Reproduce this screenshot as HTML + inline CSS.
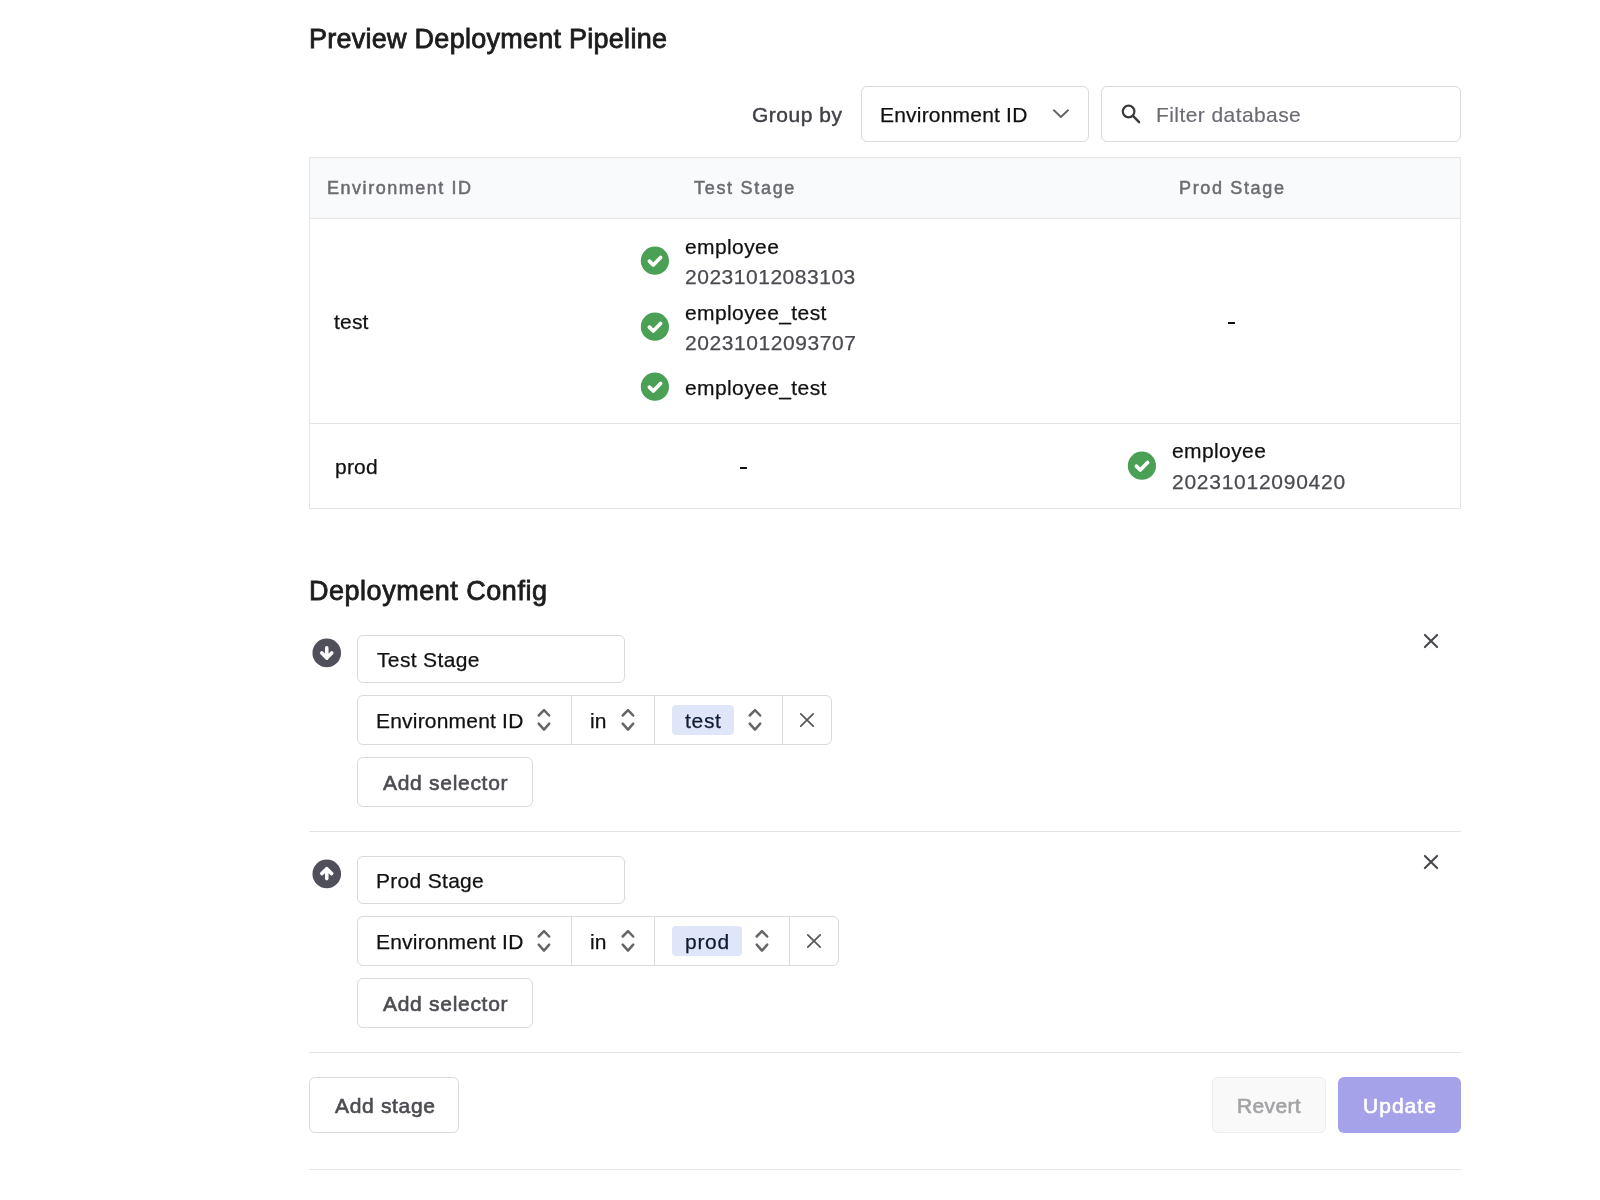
<!DOCTYPE html>
<html>
<head>
<meta charset="utf-8">
<title>Deployment Config</title>
<style>
html,body{margin:0;padding:0;background:#fff;}
body{width:1600px;height:1200px;position:relative;overflow:hidden;font-family:"Liberation Sans",sans-serif;color:#111;}
.a{position:absolute;}
.t{position:absolute;white-space:pre;line-height:1;will-change:transform;}
svg{position:absolute;overflow:visible;}
</style>
</head>
<body>
<div class="t" style="left:308.7px;top:25.75px;font-size:27px;font-weight:400;letter-spacing:0.26px;color:#1c1c1e;-webkit-text-stroke:0.8px #1c1c1e;">Preview Deployment Pipeline</div>
<div class="t" style="left:752px;top:103.60px;font-size:21px;font-weight:400;letter-spacing:0.5px;color:#3f3f46;-webkit-text-stroke:0.45px #3f3f46;">Group by</div>
<div class="a" style="left:861px;top:86px;width:228px;height:56px;box-sizing:border-box;border:1px solid #d9d9de;border-radius:6px;background:#fff;"></div>
<div class="t" style="left:880px;top:104.20px;font-size:21px;font-weight:400;letter-spacing:0.2px;color:#111;-webkit-text-stroke:0.25px #111;">Environment ID</div>
<svg style="left:1045px;top:100px" width="30" height="28"><path d="M8.9 10.3 L15.9 17 L23 10.3" fill="none" stroke="#666" stroke-width="1.9" stroke-linecap="round" stroke-linejoin="round"/></svg>
<div class="a" style="left:1101px;top:86px;width:360px;height:56px;box-sizing:border-box;border:1px solid #d9d9de;border-radius:6px;background:#fff;"></div>
<svg style="left:1115px;top:100px" width="32" height="28"><circle cx="13.6" cy="11.5" r="5.8" fill="none" stroke="#3a3a3a" stroke-width="2.2"/><path d="M18 15.9 L24.1 22.2" stroke="#3a3a3a" stroke-width="2.4" stroke-linecap="round"/></svg>
<div class="t" style="left:1155.8px;top:104.00px;font-size:21px;font-weight:400;letter-spacing:0.42px;color:#6b6b73;-webkit-text-stroke:0.15px #6b6b73;">Filter database</div>
<div class="a" style="left:309px;top:157px;width:1152px;height:352px;box-sizing:border-box;border:1px solid #e4e5e7;"></div>
<div class="a" style="left:310px;top:158px;width:1150px;height:60px;background:#f9fafb;"></div>
<div class="a" style="left:310px;top:218px;width:1150px;height:1px;background:#e4e5e7;"></div>
<div class="a" style="left:310px;top:423px;width:1150px;height:1px;background:#e4e5e7;"></div>
<div class="t" style="left:327px;top:179.00px;font-size:18px;font-weight:400;letter-spacing:1.53px;color:#6b6b70;-webkit-text-stroke:0.5px #6b6b70;">Environment ID</div>
<div class="t" style="left:694px;top:179.00px;font-size:18px;font-weight:400;letter-spacing:1.7px;color:#6b6b70;-webkit-text-stroke:0.5px #6b6b70;">Test Stage</div>
<div class="t" style="left:1179px;top:179.00px;font-size:18px;font-weight:400;letter-spacing:1.65px;color:#6b6b70;-webkit-text-stroke:0.5px #6b6b70;">Prod Stage</div>
<div class="t" style="left:334px;top:310.60px;font-size:21px;font-weight:400;letter-spacing:0.2px;color:#111;-webkit-text-stroke:0.25px #111;">test</div>
<div class="t" style="left:334.5px;top:455.60px;font-size:21px;font-weight:400;letter-spacing:0.2px;color:#111;-webkit-text-stroke:0.25px #111;">prod</div>
<svg style="left:640px;top:246px" width="30" height="30" viewBox="0 0 30 30"><circle cx="14.9" cy="14.7" r="14.1" fill="#4aa054"/><path d="M9.4 15.1 L13.3 19 L20.6 11.5" fill="none" stroke="#fff" stroke-width="3.7" stroke-linecap="round" stroke-linejoin="round"/></svg>
<svg style="left:640px;top:312px" width="30" height="30" viewBox="0 0 30 30"><circle cx="14.9" cy="14.7" r="14.1" fill="#4aa054"/><path d="M9.4 15.1 L13.3 19 L20.6 11.5" fill="none" stroke="#fff" stroke-width="3.7" stroke-linecap="round" stroke-linejoin="round"/></svg>
<svg style="left:640px;top:372px" width="30" height="30" viewBox="0 0 30 30"><circle cx="14.9" cy="14.7" r="14.1" fill="#4aa054"/><path d="M9.4 15.1 L13.3 19 L20.6 11.5" fill="none" stroke="#fff" stroke-width="3.7" stroke-linecap="round" stroke-linejoin="round"/></svg>
<svg style="left:1127px;top:451px" width="30" height="30" viewBox="0 0 30 30"><circle cx="14.9" cy="14.7" r="14.1" fill="#4aa054"/><path d="M9.4 15.1 L13.3 19 L20.6 11.5" fill="none" stroke="#fff" stroke-width="3.7" stroke-linecap="round" stroke-linejoin="round"/></svg>
<div class="t" style="left:685px;top:235.60px;font-size:21px;font-weight:400;letter-spacing:0.4px;color:#111;-webkit-text-stroke:0.25px #111;">employee</div>
<div class="t" style="left:685px;top:265.75px;font-size:21px;font-weight:400;letter-spacing:0.52px;color:#4a4a50;-webkit-text-stroke:0.25px #4a4a50;">20231012083103</div>
<div class="t" style="left:685px;top:301.50px;font-size:21px;font-weight:400;letter-spacing:0.4px;color:#111;-webkit-text-stroke:0.25px #111;">employee_test</div>
<div class="t" style="left:685px;top:331.50px;font-size:21px;font-weight:400;letter-spacing:0.58px;color:#4a4a50;-webkit-text-stroke:0.25px #4a4a50;">20231012093707</div>
<div class="t" style="left:685px;top:376.50px;font-size:21px;font-weight:400;letter-spacing:0.4px;color:#111;-webkit-text-stroke:0.25px #111;">employee_test</div>
<div class="t" style="left:1172px;top:440.30px;font-size:21px;font-weight:400;letter-spacing:0.4px;color:#111;-webkit-text-stroke:0.25px #111;">employee</div>
<div class="t" style="left:1172px;top:470.75px;font-size:21px;font-weight:400;letter-spacing:0.74px;color:#4a4a50;-webkit-text-stroke:0.25px #4a4a50;">20231012090420</div>
<div class="a" style="left:1228px;top:322px;width:7px;height:2px;background:#111;"></div>
<div class="a" style="left:740px;top:467px;width:7px;height:2px;background:#111;"></div>
<div class="t" style="left:308.5px;top:577.50px;font-size:27px;font-weight:400;letter-spacing:0.52px;color:#1c1c1e;-webkit-text-stroke:0.8px #1c1c1e;">Deployment Config</div>
<svg style="left:312px;top:638px" width="30" height="30"><circle cx="14.75" cy="14.9" r="14.3" fill="#50505a"/><path d="M14.75 9.9 L14.75 19.5 M9.8 15 L14.75 20.1 L19.7 15" fill="none" stroke="#fff" stroke-width="3.6" stroke-linecap="round" stroke-linejoin="round"/></svg>
<div class="a" style="left:357px;top:635px;width:268px;height:48px;box-sizing:border-box;border:1px solid #d9d9de;border-radius:6px;background:#fff;"></div>
<div class="t" style="left:376.5px;top:648.70px;font-size:21px;font-weight:400;letter-spacing:0.35px;color:#111;-webkit-text-stroke:0.25px #111;">Test Stage</div>
<svg style="left:1421px;top:631px" width="20" height="20"><path d="M3.9 3.9 L16.1 16.1 M16.1 3.9 L3.9 16.1" stroke="#48484d" stroke-width="2.1" stroke-linecap="round"/></svg>
<div class="a" style="left:357px;top:695px;width:475px;height:50px;box-sizing:border-box;border:1px solid #d9d9de;border-radius:6px;background:#fff;"></div>
<div class="a" style="left:571px;top:695px;width:1px;height:50px;background:#d9d9de;"></div>
<div class="a" style="left:654px;top:695px;width:1px;height:50px;background:#d9d9de;"></div>
<div class="a" style="left:782px;top:695px;width:1px;height:50px;background:#d9d9de;"></div>
<div class="t" style="left:375.5px;top:709.75px;font-size:21px;font-weight:400;letter-spacing:0.2px;color:#111;-webkit-text-stroke:0.25px #111;">Environment ID</div>
<svg style="left:536px;top:706px" width="16" height="28"><path d="M2.7 9.5 L8 4.1 L13.2 9.5 M2.7 17.6 L8 23.6 L13.2 17.6" fill="none" stroke="#666669" stroke-width="2.5" stroke-linecap="round" stroke-linejoin="round"/></svg>
<div class="t" style="left:589.5px;top:709.75px;font-size:21px;font-weight:400;letter-spacing:0.2px;color:#111;-webkit-text-stroke:0.25px #111;">in</div>
<svg style="left:620px;top:706px" width="16" height="28"><path d="M2.7 9.5 L8 4.1 L13.2 9.5 M2.7 17.6 L8 23.6 L13.2 17.6" fill="none" stroke="#666669" stroke-width="2.5" stroke-linecap="round" stroke-linejoin="round"/></svg>
<div class="a" style="left:672.3px;top:705px;width:61.6px;height:30px;border-radius:4px;background:#dfe6f9;"></div>
<div class="t" style="left:685px;top:709.70px;font-size:21px;font-weight:400;letter-spacing:0.7px;color:#0f1a33;-webkit-text-stroke:0.25px #0f1a33;">test</div>
<svg style="left:747px;top:706px" width="16" height="28"><path d="M2.7 9.5 L8 4.1 L13.2 9.5 M2.7 17.6 L8 23.6 L13.2 17.6" fill="none" stroke="#666669" stroke-width="2.5" stroke-linecap="round" stroke-linejoin="round"/></svg>
<svg style="left:797px;top:710px" width="20" height="20"><path d="M3.8 3.8 L16.2 16.2 M16.2 3.8 L3.8 16.2" stroke="#55555a" stroke-width="1.7" stroke-linecap="round"/></svg>
<div class="a" style="left:357px;top:757px;width:176px;height:50px;box-sizing:border-box;border:1px solid #d9d9de;border-radius:6px;background:#fff;"></div>
<div class="t" style="left:382.5px;top:772.00px;font-size:21px;font-weight:400;letter-spacing:0.71px;color:#4b4b52;-webkit-text-stroke:0.6px #4b4b52;">Add selector</div>
<div class="a" style="left:309px;top:830.5px;width:1152px;height:1px;background:#e5e5e8;"></div>
<svg style="left:312px;top:859.3px" width="30" height="30"><circle cx="14.75" cy="14.9" r="14.3" fill="#50505a"/><path d="M14.75 19.6 L14.75 10.3 M9.8 14.6 L14.75 9.7 L19.7 14.6" fill="none" stroke="#fff" stroke-width="3.6" stroke-linecap="round" stroke-linejoin="round"/></svg>
<div class="a" style="left:357px;top:856.3px;width:268px;height:48px;box-sizing:border-box;border:1px solid #d9d9de;border-radius:6px;background:#fff;"></div>
<div class="t" style="left:375.5px;top:870.00px;font-size:21px;font-weight:400;letter-spacing:0.3px;color:#111;-webkit-text-stroke:0.25px #111;">Prod Stage</div>
<svg style="left:1421px;top:852.3px" width="20" height="20"><path d="M3.9 3.9 L16.1 16.1 M16.1 3.9 L3.9 16.1" stroke="#48484d" stroke-width="2.1" stroke-linecap="round"/></svg>
<div class="a" style="left:357px;top:916.3px;width:481.5px;height:50px;box-sizing:border-box;border:1px solid #d9d9de;border-radius:6px;background:#fff;"></div>
<div class="a" style="left:571px;top:916.3px;width:1px;height:50px;background:#d9d9de;"></div>
<div class="a" style="left:654px;top:916.3px;width:1px;height:50px;background:#d9d9de;"></div>
<div class="a" style="left:789px;top:916.3px;width:1px;height:50px;background:#d9d9de;"></div>
<div class="t" style="left:375.5px;top:931.05px;font-size:21px;font-weight:400;letter-spacing:0.2px;color:#111;-webkit-text-stroke:0.25px #111;">Environment ID</div>
<svg style="left:536px;top:927.3px" width="16" height="28"><path d="M2.7 9.5 L8 4.1 L13.2 9.5 M2.7 17.6 L8 23.6 L13.2 17.6" fill="none" stroke="#666669" stroke-width="2.5" stroke-linecap="round" stroke-linejoin="round"/></svg>
<div class="t" style="left:589.5px;top:931.05px;font-size:21px;font-weight:400;letter-spacing:0.2px;color:#111;-webkit-text-stroke:0.25px #111;">in</div>
<svg style="left:620px;top:927.3px" width="16" height="28"><path d="M2.7 9.5 L8 4.1 L13.2 9.5 M2.7 17.6 L8 23.6 L13.2 17.6" fill="none" stroke="#666669" stroke-width="2.5" stroke-linecap="round" stroke-linejoin="round"/></svg>
<div class="a" style="left:672.3px;top:926.3px;width:69.4px;height:30px;border-radius:4px;background:#dfe6f9;"></div>
<div class="t" style="left:685px;top:931.00px;font-size:21px;font-weight:400;letter-spacing:0.7px;color:#0f1a33;-webkit-text-stroke:0.25px #0f1a33;">prod</div>
<svg style="left:754px;top:927.3px" width="16" height="28"><path d="M2.7 9.5 L8 4.1 L13.2 9.5 M2.7 17.6 L8 23.6 L13.2 17.6" fill="none" stroke="#666669" stroke-width="2.5" stroke-linecap="round" stroke-linejoin="round"/></svg>
<svg style="left:804px;top:931.3px" width="20" height="20"><path d="M3.8 3.8 L16.2 16.2 M16.2 3.8 L3.8 16.2" stroke="#55555a" stroke-width="1.7" stroke-linecap="round"/></svg>
<div class="a" style="left:357px;top:978.3px;width:176px;height:50px;box-sizing:border-box;border:1px solid #d9d9de;border-radius:6px;background:#fff;"></div>
<div class="t" style="left:382.5px;top:993.30px;font-size:21px;font-weight:400;letter-spacing:0.71px;color:#4b4b52;-webkit-text-stroke:0.6px #4b4b52;">Add selector</div>
<div class="a" style="left:309px;top:1051.8px;width:1152px;height:1px;background:#e5e5e8;"></div>
<div class="a" style="left:309px;top:1077px;width:150px;height:56px;box-sizing:border-box;border:1px solid #d9d9de;border-radius:6px;background:#fff;"></div>
<div class="t" style="left:334.5px;top:1094.90px;font-size:21px;font-weight:400;letter-spacing:0.68px;color:#4b4b52;-webkit-text-stroke:0.6px #4b4b52;">Add stage</div>
<div class="a" style="left:1212px;top:1077px;width:114px;height:56px;box-sizing:border-box;border:1px solid #ececec;border-radius:6px;background:#f9f9f9;"></div>
<div class="t" style="left:1236.5px;top:1094.75px;font-size:21px;font-weight:400;letter-spacing:0.35px;color:#a3a3a6;-webkit-text-stroke:0.6px #a3a3a6;">Revert</div>
<div class="a" style="left:1338px;top:1077px;width:123px;height:56px;border-radius:6px;background:#a6a2e9;"></div>
<div class="t" style="left:1363px;top:1095.00px;font-size:21px;font-weight:400;letter-spacing:1.03px;color:#fff;-webkit-text-stroke:0.6px #fff;">Update</div>
<div class="a" style="left:309px;top:1169px;width:1152px;height:1px;background:#e5e5e8;"></div>
</body>
</html>
